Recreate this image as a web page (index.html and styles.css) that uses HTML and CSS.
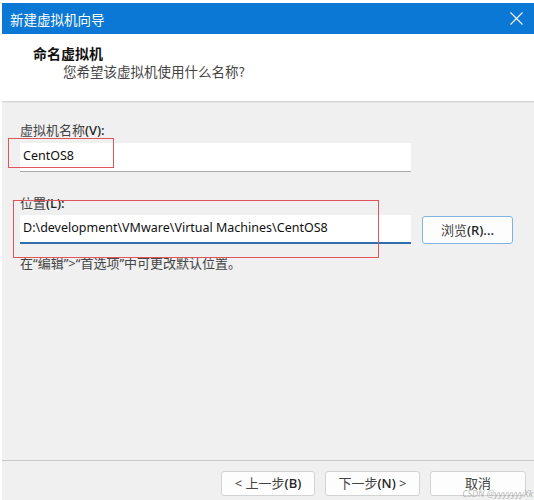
FILE: index.html
```html
<!DOCTYPE html>
<html lang="zh-CN">
<head>
<meta charset="utf-8">
<title>新建虚拟机向导</title>
<link rel="stylesheet" href="styles.css">
</head>
<body>
<div class="window">
  <div class="titlebar">
    <span class="title">新建虚拟机向导</span>
    <span class="close">
      <svg width="13" height="13" viewBox="0 0 13 13"><path d="M0.5 0.5 L12.5 12.5 M12.5 0.5 L0.5 12.5" stroke="#fff" stroke-width="1.1" fill="none"/></svg>
    </span>
  </div>
  <div class="header">
    <div class="h-title">命名虚拟机</div>
    <div class="h-sub">您希望该虚拟机使用什么名称?</div>
  </div>
  <div class="hsep"></div>
  <div class="body">
    <div class="content">
      <div class="label label-first">虚拟机名称<b>(V):</b></div>
      <div class="field field-name">CentOS8</div>
      <div class="label label-second">位置<b>(L):</b></div>
      <div class="row">
        <div class="field field-path">D:\development\VMware\Virtual Machines\CentOS8</div>
        <div class="browse">浏览<b>(R)...</b></div>
      </div>
      <div class="hint">在“编辑”&gt;“首选项”中可更改默认位置。</div>
    </div>
    <div class="footer">
      <div class="btn btn-back">&lt; 上一步<b>(B)</b></div>
      <div class="btn btn-next">下一步<b>(N)</b> &gt;</div>
      <div class="btn btn-cancel">取消</div>
    </div>
  </div>
  <div class="mark mark-name"></div>
  <div class="mark mark-path"></div>
  <div class="watermark">CSDN @yyyyyyyXk</div>
</div>
</body>
</html>
```
FILE: styles.css
```css
html, body {
  margin: 0;
  padding: 0;
  background: #ffffff;
}
body {
  width: 534px;
  height: 500px;
  overflow: hidden;
}
.window {
  position: relative;
  margin: 3px 0 0 2px;
  width: 532px;
  height: 497px;
  display: flex;
  flex-direction: column;
  font-family: "Noto Sans", "Noto Sans CJK SC", sans-serif;
  color: #333;
}
b {
  font-weight: 500;
  color: #222;
}
.titlebar {
  height: 31px;
  background: #0b78d6;
  display: flex;
  align-items: center;
  justify-content: space-between;
  padding: 0 11px 0 8px;
  flex: none;
}
.title {
  color: #fff;
  font-family: "Noto Sans CJK SC", sans-serif;
  font-size: 13.5px;
  line-height: 18px;
}
.close {
  display: flex;
  width: 13px;
  height: 13px;
}
.header {
  height: 67px;
  background: #fff;
  box-sizing: border-box;
  padding: 10px 0 0 31px;
  flex: none;
}
.h-title {
  font-family: "Noto Sans CJK SC", sans-serif;
  font-weight: 700;
  font-size: 14px;
  line-height: 18px;
  color: #111;
}
.h-sub {
  font-family: "Noto Sans CJK SC", sans-serif;
  font-size: 13.5px;
  line-height: 18px;
  color: #444;
  padding-left: 30px;
}
.hsep {
  height: 1px;
  background: #d4d4d4;
  border-bottom: 1px solid #e6e6e6;
  flex: none;
}
.body {
  flex: 1;
  background: #f0f0f0;
  display: flex;
  flex-direction: column;
}
.content {
  flex: 1;
  padding: 19px 0 0 18px;
}
.label {
  font-size: 13px;
  line-height: 16px;
  color: #444;
}
.label-second {
  margin-top: 23px;
}
.field {
  box-sizing: border-box;
  width: 391px;
  height: 29px;
  background: #fff;
  font-size: 12.5px;
  line-height: 26px;
  padding-left: 3px;
  color: #111;
}
.field-name {
  margin-top: 5px;
  border-bottom: 1px solid #a9a9a9;
}
.row {
  margin-top: 4px;
  display: flex;
  align-items: flex-start;
  gap: 11px;
}
.field-path {
  border-bottom: 2px solid #2f6eab;
}
.browse {
  box-sizing: border-box;
  margin-top: 1px;
  width: 91px;
  height: 28px;
  background: #fdfdfd;
  border: 1px solid #7fb3e3;
  border-radius: 3px;
  font-size: 13px;
  line-height: 26px;
  text-align: center;
  color: #444;
}
.hint {
  margin-top: 11px;
  font-size: 13px;
  line-height: 16px;
  color: #444;
}
.footer {
  flex: none;
  height: 40px;
  border-top: 1px solid #c9c9c9;
  display: flex;
  justify-content: flex-end;
  align-items: flex-start;
  gap: 10px;
  padding: 10px 8px 0 0;
  box-sizing: border-box;
}
.btn {
  box-sizing: border-box;
  height: 25px;
  background: #fdfdfd;
  border: 1px solid #d3d3d3;
  border-radius: 3px;
  font-size: 13px;
  line-height: 23px;
  text-align: center;
  color: #444;
}
.btn-back { width: 94px; }
.btn-next { width: 95px; }
.btn-cancel { width: 96px; }
.mark {
  position: absolute;
  border: 1px solid #e0555b;
  box-sizing: border-box;
}
.mark-name {
  left: 6px;
  top: 135px;
  width: 106px;
  height: 30px;
}
.mark-path {
  left: 11px;
  top: 197px;
  width: 366px;
  height: 58px;
}
.watermark {
  position: absolute;
  right: 1px;
  bottom: 1px;
  font-size: 9px;
  line-height: 10px;
  color: rgba(150, 150, 150, 0.65);
  font-style: italic;
}
```
